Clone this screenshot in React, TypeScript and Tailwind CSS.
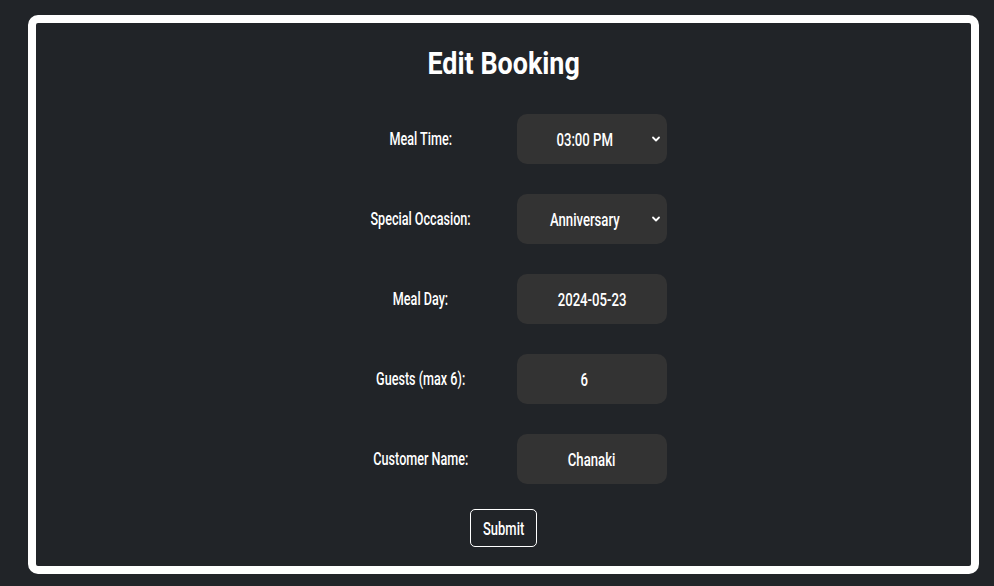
const rows = [
  { label: "Meal Time:", value: "03:00 PM", select: true, pad: true },
  { label: "Special Occasion:", value: "Anniversary", select: true, pad: true },
  { label: "Meal Day:", value: "2024-05-23", select: false, pad: false },
  { label: "Guests (max 6):", value: "6", select: false, pad: true },
  { label: "Customer Name:", value: "Chanaki", select: false, pad: false },
];

function Chevron() {
  return (
    <svg width="10" height="10" viewBox="0 0 10 10" className="absolute right-[6px] top-1/2 -translate-y-1/2">
      <path d="M2 3.5 L5 6.5 L8 3.5" fill="none" stroke="white" strokeWidth="1.8" strokeLinecap="round" strokeLinejoin="round" />
    </svg>
  );
}

export default function App() {
  return (
    <div
      className="min-h-[586px] w-full bg-[#212428] pt-[15px] pl-[28px] text-white"
      style={{ fontFamily: 'Roboto, "Liberation Sans", sans-serif' }}
    >
      <div className="w-[951px] h-[559px] border-8 border-white rounded-[10px] bg-[#212428] flex flex-col items-center">
        {/* Title */}
        <h1 className="mt-[20px] text-[32px] leading-[40px] font-bold">
          <span className="inline-block scale-x-[0.84] whitespace-nowrap">Edit Booking</span>
        </h1>

        {/* Form rows */}
        <div className="mt-[31px] flex flex-col gap-[30px] ml-[6px]">
          {rows.map((r) => (
            <div key={r.label} className="flex items-center gap-[21px]">
              <label className="w-[150px] text-center text-[18px] leading-[24px] font-medium">
                <span className="inline-block scale-x-[0.7] whitespace-nowrap">{r.label}</span>
              </label>
              <div
                className={
                  r.pad
                    ? "relative w-[150px] h-[50px] rounded-[10px] bg-[#333333] flex items-center justify-center pr-[15px] text-[18px] font-medium"
                    : "relative w-[150px] h-[50px] rounded-[10px] bg-[#333333] flex items-center justify-center text-[18px] font-medium"
                }
              >
                <span className="inline-block scale-x-[0.73] whitespace-nowrap">{r.value}</span>
                {r.select && <Chevron />}
              </div>
            </div>
          ))}
        </div>

        <button className="mt-[25px] w-[67px] h-[38px] border border-white rounded-[5px] text-[18px] font-medium">
          <span className="inline-block scale-x-[0.72] whitespace-nowrap">Submit</span>
        </button>
      </div>
    </div>
  );
}
